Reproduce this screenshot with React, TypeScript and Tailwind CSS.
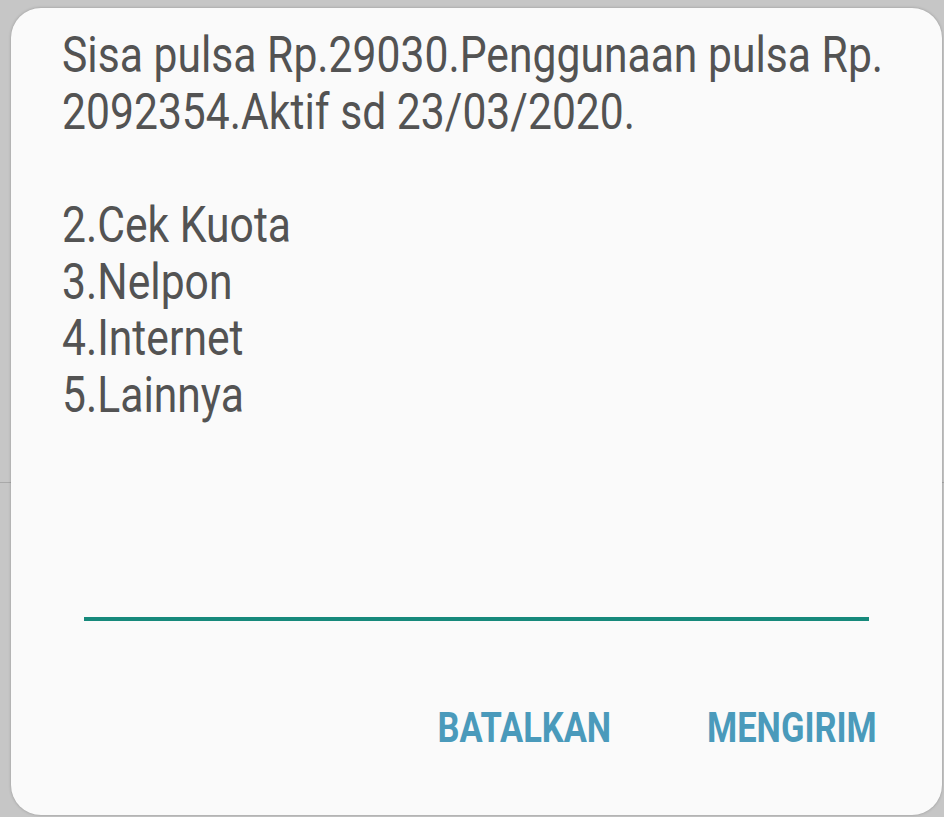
import React from "react";

const lines = [
  "Sisa pulsa Rp.29030.Penggunaan pulsa Rp.",
  "2092354.Aktif sd 23/03/2020.",
  "",
  "2.Cek Kuota",
  "3.Nelpon",
  "4.Internet",
  "5.Lainnya",
];

export default function App() {
  return (
    <div className="relative h-[817px] w-[944px] overflow-hidden bg-[#c6c6c6]">
      {/* page behind the dialog */}
      <div className="h-[482px]" />
      <div className="h-px bg-[#a9a9a9]" />

      {/* ussd dialog */}
      <div
        className="absolute left-[11px] top-[8px] flex h-[807px] w-[931px] flex-col rounded-[30px] bg-[#fafafa] shadow-[0_0_3px_rgba(0,0,0,0.25)]"
        style={{ fontFamily: 'Roboto, "Liberation Sans", sans-serif' }}
      >
        {/* the phone font is narrower than Roboto, so squeeze it */}
        <div className="pl-[51px] pt-[19px] text-[50px] leading-[56.7px] text-[#535353]">
          <div className="origin-left scale-x-[0.853]">
            {lines.map((line, i) => (
              <div key={i} className="h-[56.7px] whitespace-nowrap">
                {line}
              </div>
            ))}
          </div>
        </div>

        <div className="mx-[73px] mt-[193px] h-[4px] bg-[#16897b]" />

        <div className="mt-[86px] flex justify-end pr-[65px] text-[42px] font-bold leading-none text-[#4a9abb]">
          <div className="flex origin-right scale-x-[0.82] gap-[117px]">
            <button>BATALKAN</button>
            <button>MENGIRIM</button>
          </div>
        </div>
      </div>
    </div>
  );
}
